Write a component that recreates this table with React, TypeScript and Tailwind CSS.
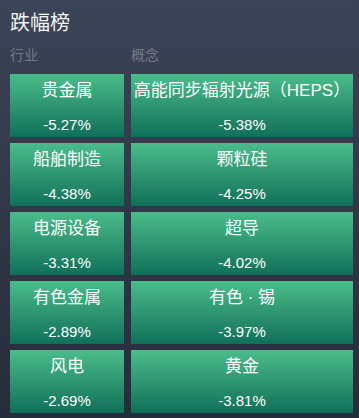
import React from 'react';

type Item = { name: string; pct: string };

const industries: Item[] = [
    { name: '贵金属', pct: '-5.27%' },
    { name: '船舶制造', pct: '-4.38%' },
    { name: '电源设备', pct: '-3.31%' },
    { name: '有色金属', pct: '-2.89%' },
    { name: '风电', pct: '-2.69%' },
];

const concepts: Item[] = [
    { name: '高能同步辐射光源（HEPS）', pct: '-5.38%' },
    { name: '颗粒硅', pct: '-4.25%' },
    { name: '超导', pct: '-4.02%' },
    { name: '有色 · 锡', pct: '-3.97%' },
    { name: '黄金', pct: '-3.81%' },
];

const Card: React.FC<{ item: Item }> = ({ item }) => (
    <div className="h-[63px] bg-gradient-to-b from-[#4abd8b] to-[#0e7058] flex flex-col items-center pt-[5px] text-white overflow-visible">
        <div className="text-[17px] leading-[24px] whitespace-nowrap">{item.name}</div>
        <div className="text-[15px] leading-[20px] mt-[12px]">{item.pct}</div>
    </div>
);

const App: React.FC = () => {
    return (
        <div
            className="w-[359px] h-[418px] bg-gradient-to-b from-[#3c4457] to-[#252c3a] overflow-hidden"
            style={{ fontFamily: '"Liberation Sans", "Noto Sans CJK SC", sans-serif' }}
        >
            <div className="pl-[10px] pt-[9px] text-[20px] leading-[28px] text-[#f2f2f2]">跌幅榜</div>
            <div className="grid grid-cols-[114px_222px] gap-x-[7px] pl-[10px] mt-[8px] text-[14px] leading-[20px] text-[#747a89]">
                <div>行业</div>
                <div>概念</div>
            </div>
            <div className="grid grid-cols-[114px_222px] gap-x-[7px] gap-y-[6px] pl-[10px] mt-[9px]">
                {industries.map((ind, i) => (
                    <React.Fragment key={ind.name}>
                        <Card item={ind} />
                        <Card item={concepts[i]} />
                    </React.Fragment>
                ))}
            </div>
        </div>
    );
};

export default App;
